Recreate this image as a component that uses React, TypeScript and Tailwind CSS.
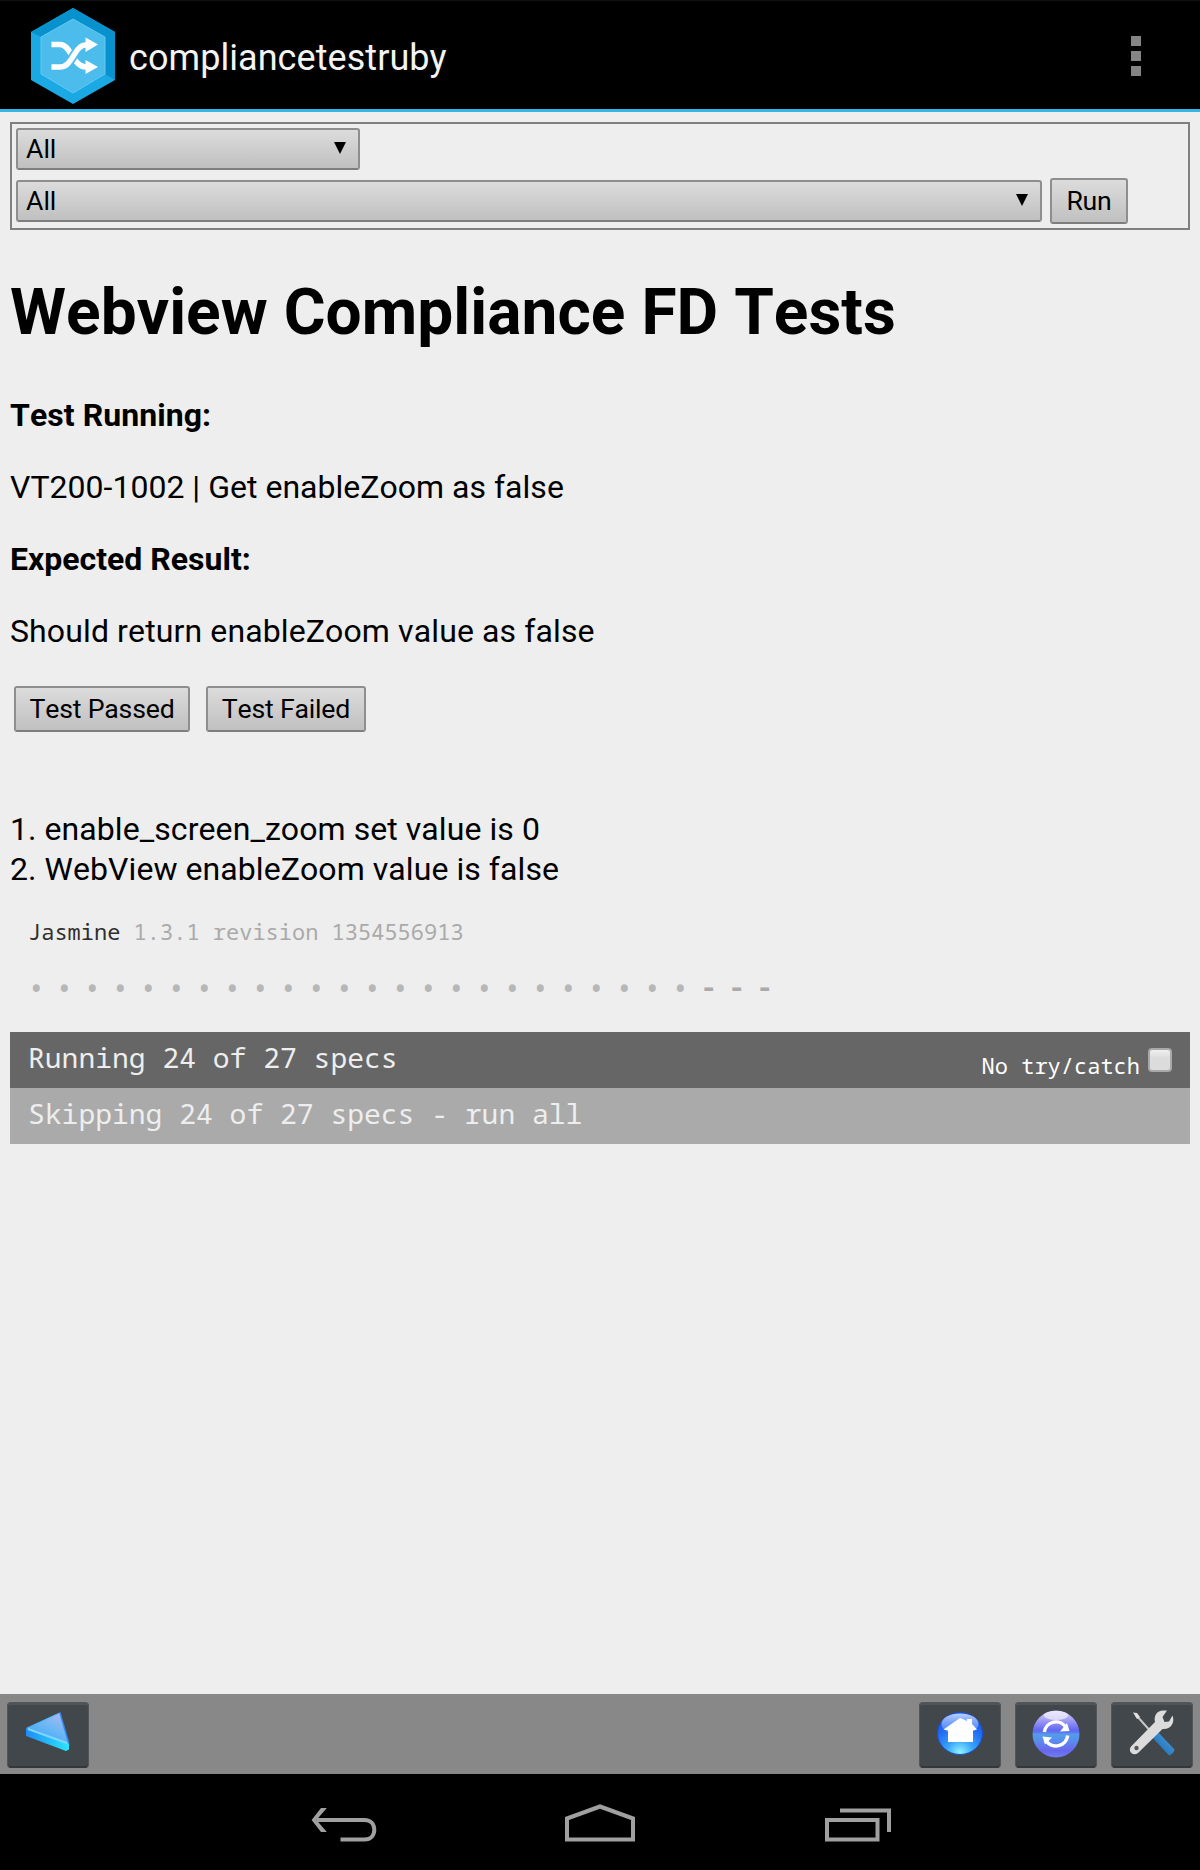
import type { ReactNode } from "react";

const shell =
  "flex items-center rounded-[3px] border-2 border-[#8e8e8e] border-b-[#7e7e7e] bg-linear-to-b from-[#dcdcdc] to-[#c0c0c0] text-[26.67px] leading-[38px] text-black";

function Select({ value, width }: { value: string; width: string }) {
  return (
    <div className={`${shell} h-[42px] justify-between pr-3 pl-2 ${width}`}>
      <span>{value}</span>
      <svg width="12" height="12" viewBox="0 0 12 12" className="mb-[2px]">
        <path d="M0 0H12L6 12Z" fill="#000" />
      </svg>
    </div>
  );
}

function Button({ children, width }: { children: ReactNode; width: string }) {
  return <button className={`${shell} h-[46px] justify-center tracking-[-0.2px] ${width}`}>{children}</button>;
}

function AppLogo() {
  return (
    <svg width="84" height="96" viewBox="0 0 84 96" className="shrink-0">
      <path d="M42 0L84 24V72L42 96L0 72V24Z" fill="#1ba9e4" />
      <path d="M42 0L84 24V72L74 66V30L42 11L10 29L0 24Z" fill="#0792cd" />
      <path d="M42 11L74 29V66L42 85L10 66V29Z" fill="#4bbceb" stroke="#66c8f1" strokeWidth="1" />
      <g fill="none" stroke="#fff" strokeWidth="5.5">
        <path d="M20.500 36.500H29C40 36.500 42 59 55 59" />
        <path d="M20.500 59H29C42 59 43 37 55 37" stroke="#4bbceb" strokeWidth="9" />
        <path d="M20.500 59H29C42 59 43 37 55 37" />
      </g>
      <path d="M54.500 29.500L67 36.500L54.500 44ZM54.500 52L67 59L54.500 66Z" fill="#fff" />
    </svg>
  );
}

function ToolButton({ children }: { children: ReactNode }) {
  return (
    <button className="flex h-[66px] w-[82px] justify-center rounded-[4px] border border-[#51565a] border-b-[#33373a] bg-[#42474b] shadow-[inset_0_2px_0_#50555a,inset_0_-1px_0_#33373a]">
      {children}
    </button>
  );
}

function BackIcon() {
  return (
    <svg width="80" height="64" viewBox="8 1703 80 64">
      <defs>
        <linearGradient id="bk1" x1="1" y1="0" x2=".3" y2="1">
          <stop offset="0" stopColor="#b9b9ef" />
          <stop offset=".55" stopColor="#68b7f6" />
          <stop offset="1" stopColor="#3da4f5" />
        </linearGradient>
        <linearGradient id="bk2">
          <stop offset="0" stopColor="#1f8cf5" />
          <stop offset="1" stopColor="#2be6ff" />
        </linearGradient>
      </defs>
      <path d="M26 1728L60 1712.500L69 1744V1749.500L66 1751L26 1736Z" fill="url(#bk2)" />
      <path d="M27 1728L59.500 1713L68 1743Z" fill="url(#bk1)" stroke="#4aaef8" strokeWidth=".8" />
      <path d="M60 1712.500L68.800 1743" stroke="#3f7ee8" strokeWidth="1.300" />
      <path d="M28 1729L67 1743" stroke="#80d6ff" strokeWidth="2" />
    </svg>
  );
}

function HomeIcon() {
  return (
    <svg width="80" height="64" viewBox="920 1703 80 64">
      <defs>
        <radialGradient id="hm" cx=".5" cy=".95" r=".85">
          <stop offset="0" stopColor="#8ff4ff" />
          <stop offset=".35" stopColor="#38a5fb" />
          <stop offset=".7" stopColor="#236ff5" />
          <stop offset="1" stopColor="#1b58e8" />
        </radialGradient>
        <linearGradient id="hmg" x1="0" y1="0" x2="0" y2="1">
          <stop offset="0" stopColor="#b9d0ff" />
          <stop offset="1" stopColor="#6f9fff" stopOpacity=".4" />
        </linearGradient>
      </defs>
      <ellipse cx="960" cy="1733.500" rx="22.500" ry="21" fill="url(#hm)" stroke="#1b4fd0" />
      <ellipse cx="960" cy="1724" rx="18.500" ry="10.500" fill="url(#hmg)" />
      <path d="M960 1718L967 1721V1719H972V1724L977 1729.500L973 1730.500V1742H948V1730.500L943.500 1729.500Z" fill="#fff" />
    </svg>
  );
}

function RefreshIcon() {
  return (
    <svg width="80" height="64" viewBox="1016 1703 80 64">
      <defs>
        <linearGradient id="rf" x1="0" y1="0" x2="0" y2="1">
          <stop offset="0" stopColor="#d9d6fb" />
          <stop offset=".22" stopColor="#9b98f5" />
          <stop offset=".42" stopColor="#6167f2" />
          <stop offset=".48" stopColor="#5d7df0" />
          <stop offset=".5" stopColor="#529fe9" />
          <stop offset=".65" stopColor="#5a8bee" />
          <stop offset=".85" stopColor="#6a66ee" />
          <stop offset="1" stopColor="#6c7ff0" />
        </linearGradient>
      </defs>
      <circle cx="1056" cy="1734" r="23.500" fill="url(#rf)" />
      <ellipse cx="1056" cy="1715.500" rx="12" ry="4.500" fill="#f3f1ff" opacity=".7" />
      <g fill="none" stroke="#fff" strokeWidth="3.400">
        <path d="M1044.300 1732A11.800 11.800 0 0 1 1066 1727.500" />
        <path d="M1067.700 1735.500A11.800 11.800 0 0 1 1046 1740.500" />
      </g>
      <path d="M1060 1731.500L1069.500 1731L1067 1723ZM1042.500 1736.500L1052 1737.500L1045 1744.500Z" fill="#fff" />
    </svg>
  );
}

function ToolsIcon() {
  return (
    <svg width="80" height="64" viewBox="1112 1703 80 64">
      <defs>
        <linearGradient id="tl" x1="0" y1="1" x2="1" y2="0">
          <stop offset="0" stopColor="#1562a8" />
          <stop offset="1" stopColor="#50a5e6" />
        </linearGradient>
      </defs>
      <path d="M1136 1715L1153 1734" stroke="#c5c7c8" strokeWidth="2" />
      <path d="M1133 1712.500L1137 1713L1140 1717L1137 1719Z" fill="#e2e2e2" />
      <path d="M1151.500 1736.500L1157 1731L1174.500 1749.500Q1173.500 1754 1169 1755.500Z" fill="url(#tl)" />
      <path
        d="M1163 1710.500L1167 1710.500L1162.500 1717L1164.500 1722L1169 1721.500L1172.500 1715.500C1175.500 1723 1170 1730 1162.500 1729L1138 1753C1133 1756.500 1127.500 1751.500 1131 1746.500L1155 1722C1153.500 1716 1157 1710.500 1163 1710.500Z"
        fill="#dcdcdc"
      />
      <circle cx="1136.500" cy="1748" r="2.200" fill="#55595c" />
    </svg>
  );
}

function SystemBar() {
  return (
    <div className="flex h-24 items-start bg-black pt-[30px] pl-[308px]">
      <svg width="72" height="44" viewBox="308 1804 72 44" fill="none" stroke="#a0a0a0" strokeWidth="4">
        <path d="M317 1820H364.500C371 1820 374.300 1824.500 374.300 1829.800S371 1839.500 364.500 1839.500H340.500" />
        <path d="M321 1808H326.800L316.500 1820L326.800 1832H321L311.600 1820Z" fill="#a0a0a0" stroke="none" />
      </svg>
      <svg width="76" height="44" viewBox="562 1804 76 44" fill="none" stroke="#a0a0a0" strokeWidth="4" className="ml-[182px]">
        <path d="M567 1839.500V1818.500L600 1806.500L633 1818.500V1839.500Z" />
      </svg>
      <svg width="72" height="44" viewBox="822 1804 72 44" fill="none" stroke="#a0a0a0" strokeWidth="4" className="ml-[184px]">
        <path d="M827 1820H877.500V1839.500H827Z" />
        <path d="M840 1810.500H889V1832" />
      </svg>
    </div>
  );
}

const specs = Array.from({ length: 27 }, (_, i) => i < 24);

export default function App() {
  return (
    <div className="flex h-[1870px] w-[1200px] flex-col overflow-hidden bg-[#eee] font-['Roboto',sans-serif] text-black [font-kerning:none]">
      <header className="flex h-28 items-start border-t border-b-[3px] border-t-[#111] border-b-[#33b5e5] bg-black pr-[59px] pl-[31px]">
        <div className="mt-[7px]">
          <AppLogo />
        </div>
        <h1 className="mt-[35px] ml-[14px] text-[36px] leading-[44px] tracking-[0.06px] text-[#f3f3f3]">
          compliancetestruby
        </h1>
        <div className="mt-[35px] ml-auto flex flex-col gap-[5px]">
          <span className="size-[10px] bg-[#858585]" />
          <span className="size-[10px] bg-[#858585]" />
          <span className="size-[10px] bg-[#858585]" />
        </div>
      </header>

      <main className="flex-1 px-[10px] pt-[10px]">
        <section className="h-[108px] border-2 border-[#808080] px-1 pt-1">
          <Select value="All" width="w-[344px]" />
          <div className="mt-2 flex items-center gap-2">
            <Select value="All" width="w-[1026px]" />
            <Button width="w-[78px]">Run</Button>
          </div>
        </section>

        <h1 className="mt-[45px] text-[64px] leading-[76px] font-bold tracking-[0.04px]">
          Webview Compliance FD Tests
        </h1>
        <div className="mt-[44px] flex flex-col gap-8 text-[32px] leading-[40px]">
          <p className="font-bold tracking-[0.06px]">Test Running:</p>
          <p className="tracking-[0.02px]">VT200-1002 | Get enableZoom as false</p>
          <p className="font-bold">Expected Result:</p>
          <p className="tracking-[0.12px]">Should return enableZoom value as false</p>
        </div>
        <div className="mt-[35px] ml-1 flex gap-4">
          <Button width="w-[176px]">Test Passed</Button>
          <Button width="w-[160px]">Test Failed</Button>
        </div>
        <div className="mt-[77px] text-[32px] leading-[40px] tracking-[0.07px]">
          <p>1. enable_screen_zoom set value is 0</p>
          <p>2. WebView enableZoom value is false</p>
        </div>

        <div className="mt-[28px] font-['Noto_Sans_Mono','DejaVu_Sans_Mono',monospace]">
          <p className="pl-[18px] text-[22px] leading-[28px] text-[#aaa]">
            <span className="text-[#303030]">Jasmine</span> 1.3.1 revision 1354556913
          </p>
          <ul className="mt-[27px] flex h-7 pl-[18px] leading-[28px]">
            {specs.map((ran, i) =>
              ran ? (
                <li key={i} className="mt-[2px] ml-[-1px] w-[29px] text-[31px] text-[#b7b7b7]">
                  •
                </li>
              ) : (
                <li key={i} className="w-7 text-[29px] font-bold text-[#aaa]">
                  -
                </li>
              ),
            )}
          </ul>
          <div className="mt-[32px] flex h-14 justify-between bg-[#666] pr-[18px] pl-[18px] text-[#eee]">
            <span className="text-[28px] leading-[50px]">Running 24 of 27 specs</span>
            <label className="flex items-start text-[22px] text-white">
              <span className="mt-px leading-[64px]">No try/catch</span>
              <span className="mt-4 ml-2 size-6 rounded-[4px] border-2 border-[#a9a9a9] bg-linear-to-b from-[#f0f0f0] to-[#dcdcdc] to-40%" />
            </label>
          </div>
          <div className="h-14 bg-[#aaa] pl-[18px] text-[28px] leading-[50px] text-[#eee]">
            Skipping 24 of 27 specs - run all
          </div>
        </div>
      </main>

      <nav className="flex h-20 shrink-0 items-start bg-[#888] pt-2 pr-[7px] pl-[7px]">
        <ToolButton>
          <BackIcon />
        </ToolButton>
        <div className="ml-auto flex gap-[14px]">
          <ToolButton>
            <HomeIcon />
          </ToolButton>
          <ToolButton>
            <RefreshIcon />
          </ToolButton>
          <ToolButton>
            <ToolsIcon />
          </ToolButton>
        </div>
      </nav>
      <SystemBar />
    </div>
  );
}
